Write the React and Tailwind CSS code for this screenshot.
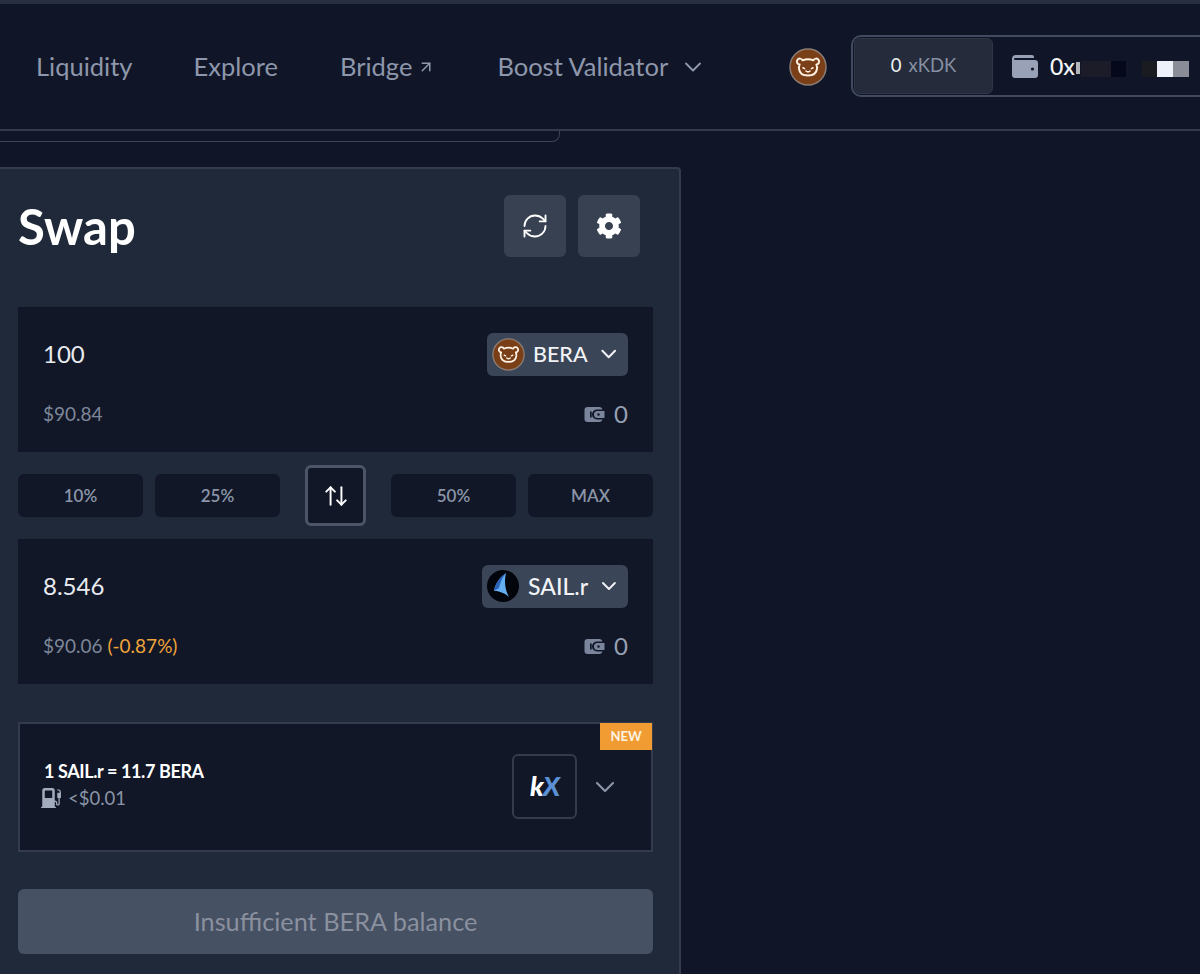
import React from 'react'
import { RefreshCw, ChevronDown, ArrowUpRight, ArrowUpDown } from 'lucide-react'
import { FaCog } from 'react-icons/fa'
import { BsFuelPumpFill } from 'react-icons/bs'

const BearIcon = ({ size = 38 }) => (
  <svg width={size} height={size} viewBox="0 0 38 38" className="shrink-0">
    <circle cx="19" cy="19" r="18" fill="#7b3f17" stroke="#8b7d74" strokeWidth="1.5" />
    <g fill="none" stroke="#fdf2e4" strokeWidth="2" strokeLinecap="round" strokeLinejoin="round">
      <path d="M13.6 12.3 A3 3 0 1 0 10.6 16.6 C10 18 9.8 19.4 10 20.8 C10.6 25.4 14.4 27.5 19 27.5 C23.6 27.5 27.4 25.4 28 20.8 C28.2 19.4 28 18 27.4 16.6 A3 3 0 1 0 24.4 12.3 C21 10.9 17 10.9 13.6 12.3 Z" />
      <path d="M14 19.8 L15.6 20.6 M24 19.8 L22.4 20.6" strokeWidth="1.6" />
      <path d="M17 23 C18.2 24 19.8 24 21 23" strokeWidth="1.6" />
    </g>
  </svg>
)

const SailIcon = () => (
  <svg width="32" height="32" viewBox="0 0 32 32" className="shrink-0">
    <circle cx="16" cy="16" r="16" fill="#03050c" />
    <path d="M19 3 C13 7 8 14 7 21 C11 20.5 18 23 22 27 C18 20 17 11 19 3 Z" fill="#64aef2" />
    <path d="M19 3 C13 7 8 14 7 21 L12 18 C13 13 15 8 19 3 Z" fill="#2a62b8" />
  </svg>
)

const MiniWallet = () => (
  <svg width="21" height="15" viewBox="0 0 20 15" className="shrink-0">
    <path fillRule="evenodd" d="M3 0 H15 A3 3 0 0 1 18 2.5 H12.5 A5 5 0 0 0 12.5 12.5 H18 A3 3 0 0 1 15 15 H3 A3 3 0 0 1 0 12 V3 A3 3 0 0 1 3 0 Z M5.5 4.5 V10.5 H7.2 V4.5 Z" fill="#7a859b" />
    <path fillRule="evenodd" d="M13 4 H20 V11 H13 A3.5 3.5 0 0 1 13 4 Z M14 6.2 A1.3 1.3 0 1 0 14 8.8 A1.3 1.3 0 1 0 14 6.2 Z" fill="#7a859b" />
  </svg>
)

const TokenRow = ({ amount, usd, extra, symbol, symbolSize, icon, gap }) => (
  <div className="h-[145px] bg-[#111727] pl-[25px] pr-[25px] pt-[25px]">
    <div className="flex h-[44px] items-center justify-between">
      <span className="text-[24px] text-[#e8ebf0]">{amount}</span>
      <button className={`flex h-[43px] items-center rounded-md bg-[#3a4557] pl-[5px] pr-[7px] ${gap}`}>
        {icon}
        <span className={`font-medium text-[#f1f3f6] ${symbolSize}`}>{symbol}</span>
        <ChevronDown size={30} strokeWidth={1.9} className="ml-auto text-[#f1f3f6]" />
      </button>
    </div>
    <div className="mt-[26px] flex h-[24px] items-center justify-between text-[19px] text-[#7d8799]">
      <span>
        {usd}
        {extra && <span className="text-[#f0a43a]"> {extra}</span>}
      </span>
      <span className="flex items-center gap-[9px] text-[24px] text-[#97a1b3]">
        <MiniWallet />0
      </span>
    </div>
  </div>
)

const Pct = ({ label }) => (
  <button className="h-[43px] w-[125px] rounded-md bg-[#111727] text-[17px] font-semibold text-[#8b95a7]">
    {label}
  </button>
)

export default function App() {
  return (
    <div className="h-[974px] w-[1200px] overflow-hidden bg-[#101627] font-['Lato',sans-serif]">
      <div className="h-[4px] bg-[#283040]" />

      {/* header */}
      <header className="flex h-[127px] items-center border-b-2 border-[#323a4b]">
        <nav className="flex flex-1 items-center pl-[36px] text-[25.5px] text-[#8e97ab]">
          <a href="#">Liquidity</a>
          <a href="#" className="ml-[61px]">Explore</a>
          <a href="#" className="ml-[62px] flex items-center gap-[5px]">
            Bridge <ArrowUpRight size={18} strokeWidth={2} />
          </a>
          <a href="#" className="ml-[62px] flex items-center gap-[11px]">
            Boost Validator <ChevronDown size={28} strokeWidth={1.6} />
          </a>
        </nav>
        <div className="flex w-[411px] items-center gap-[24px]">
          <BearIcon />
          <div className="-mt-[1px] flex h-[62px] w-[360px] items-center rounded-l-[10px] border-2 border-r-0 border-[#414a5e] pl-[1px]">
            <div className="flex h-[56px] w-[139px] items-center justify-center gap-[7px] rounded-md border border-[#2f3647] bg-[#252b3b] text-[18.5px]">
              <span className="text-[#f0f2f5]">0</span>
              <span className="text-[#8690a3]">xKDK</span>
            </div>
            <svg width="26" height="23" viewBox="0 0 26 23" className="ml-[19px] shrink-0">
              <path d="M4 0 H20 A2 2 0 0 1 22 2 V3 H3 A1 1 0 0 0 3 5 H23 A3 3 0 0 1 26 8 V20 A3 3 0 0 1 23 23 H3 A3 3 0 0 1 0 20 V4 A4 4 0 0 1 4 0 Z" fill="#98a1b5" />
              <circle cx="20.5" cy="14" r="1.6" fill="#101627" />
            </svg>
            <span className="ml-[12px] w-[26px] overflow-hidden text-[23px] font-medium text-[#f4f5f7]">0x</span>
            {/* blurred out address */}
            <div className="mt-[3px] h-[12px] w-[4px] bg-[#b4b5b8]" />
            <div className="mt-[5px] ml-[1px] flex h-[16px] items-stretch">
              <div className="w-[30px] bg-[#1b1c27]" />
              <div className="w-[15px] bg-[#05071a]" />
              <div className="w-[16px]" />
              <div className="w-[15px] bg-[#1a1b20]" />
              <div className="w-[16px] bg-[#eef0fa]" />
              <div className="w-[16px] bg-[#8a8d98]" />
            </div>
          </div>
        </div>
      </header>

      <div className="h-[11px] w-[560px] rounded-br-[8px] border-r border-b border-[#3c4456]" />

      {/* swap panel */}
      <main className="mt-[25px] w-[681px] rounded-tr-[4px] border-t-2 border-r-2 border-[#333b4d] bg-[#1f2939] pr-[26px] pl-[18px]">
        <div className="flex items-center justify-between pt-[26px] pr-[13px]">
          <h1 className="text-[49px] leading-[62px] font-bold text-white">Swap</h1>
          <div className="flex gap-[12px]">
            <button className="flex size-[62px] items-center justify-center rounded-md bg-[#374151] text-white">
              <RefreshCw size={28} strokeWidth={1.6} />
            </button>
            <button className="flex size-[62px] items-center justify-center rounded-md bg-[#374151] text-white">
              <FaCog size={26} />
            </button>
          </div>
        </div>

        <div className="mt-[50px]">
          <TokenRow
            amount="100"
            usd="$90.84"
            symbol="BERA"
            symbolSize="text-[21.5px]"
            gap="gap-[8px] w-[141px]"
            icon={<BearIcon size={33} />}
          />
        </div>

        <div className="flex h-[87px] items-center justify-between">
          <Pct label="10%" />
          <Pct label="25%" />
          <button className="mx-[13px] flex size-[61px] shrink-0 items-center justify-center rounded-md border-[3px] border-[#4b5567] bg-[#111727] text-white">
            <ArrowUpDown size={26} strokeWidth={1.8} />
          </button>
          <Pct label="50%" />
          <Pct label="MAX" />
        </div>

        <TokenRow
          amount="8.546"
          usd="$90.06"
          extra="(-0.87%)"
          symbol="SAIL.r"
          symbolSize="text-[23px]"
          gap="gap-[9px] w-[146px]"
          icon={<SailIcon />}
        />

        {/* route */}
        <div className="relative mt-[38px] flex h-[130px] items-center justify-between border-2 border-[#333b4d] bg-[#111727] pr-[30px] pl-[24px]">
          <span className="absolute -top-[1px] -right-[1px] flex h-[27px] w-[52px] items-center justify-center bg-[#f09c32] text-[13px] font-bold text-[#fdf3e3]">
            NEW
          </span>
          <div className="pb-[5px]">
            <div className="text-[18px] leading-[24px] font-bold tracking-[-0.4px] text-white">1 SAIL.r = 11.7 BERA</div>
            <div className="mt-[3px] flex items-center gap-[7px] text-[18.5px] leading-[24px] text-[#8a94a6]">
              <BsFuelPumpFill size={20} className="-ml-[3px] text-[#a3acbd]" />
              {'<$0.01'}
            </div>
          </div>
          <div className="flex items-center gap-[12px]">
            <div className="-mt-[2px] flex size-[65px] items-center justify-center rounded-md border-2 border-[#333b4d]">
              <span className="text-[27px] font-black italic tracking-[-1px]">
                <span className="text-white">k</span>
                <span className="text-[#5b8fd6]">X</span>
              </span>
            </div>
            <ChevronDown size={32} strokeWidth={1.6} className="text-[#8a94a6]" />
          </div>
        </div>

        <button className="mt-[37px] mb-[40px] h-[65px] w-full rounded-md bg-[#465164] text-[25.3px] text-[#8a909e]">
          Insufficient BERA balance
        </button>
      </main>
    </div>
  )
}
